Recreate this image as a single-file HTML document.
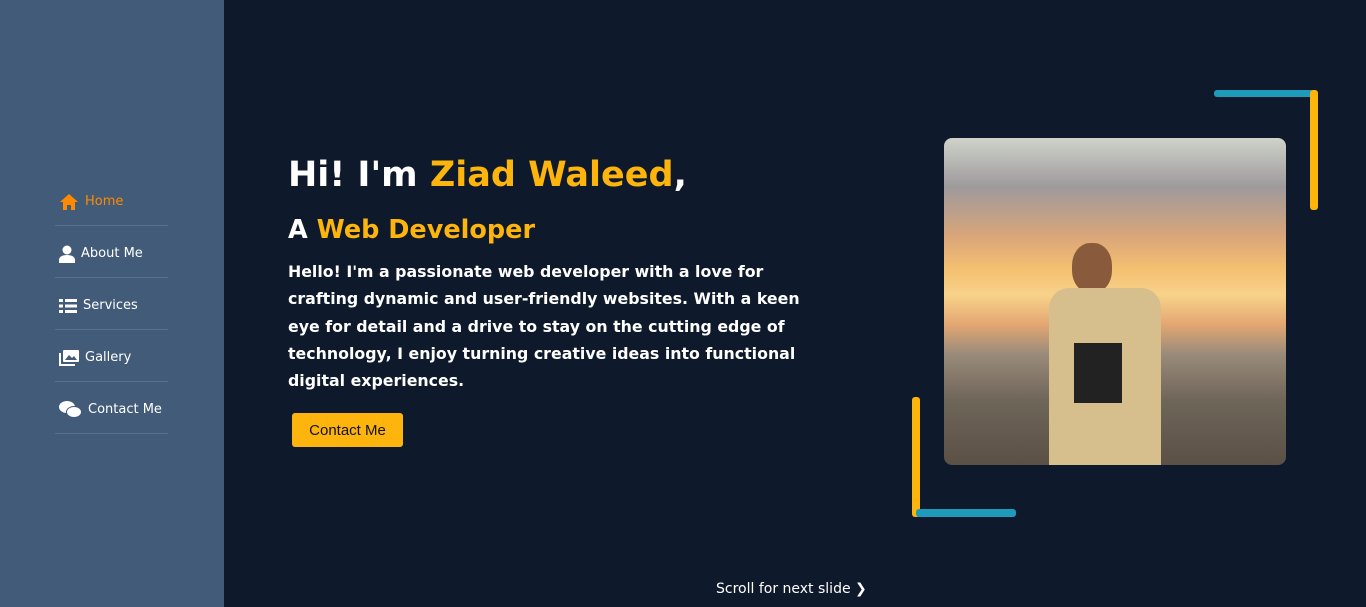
<!DOCTYPE html>
<html><head><style>
*{margin:0;padding:0;box-sizing:border-box}
body{width:1366px;height:607px;overflow:hidden;background:#0e1a2b;font-family:"Comic Sans MS","DejaVu Sans","Liberation Sans",sans-serif;position:relative}
.side{position:absolute;left:0;top:0;width:224px;height:607px;background:#425b78}
.nav{position:absolute;left:55px;top:174px;width:113px}
.nav div{height:52px;border-bottom:1px solid #5a7090;display:flex;align-items:center;padding-left:4px;padding-top:4px;color:#fff;font-size:13px;gap:6px;white-space:nowrap}
.nav div.a{color:#ff8a00}
svg{display:block;flex:none}
h1{position:absolute;left:288px;top:155px;color:#fff;font-size:35px;font-weight:bold;white-space:nowrap}
h2{position:absolute;left:288px;top:215px;color:#fff;font-size:25.5px;font-weight:bold;white-space:nowrap}
.y{color:#fdb50d}
p{position:absolute;left:288px;top:258px;color:#fff;font-size:15.8px;font-weight:bold;line-height:27.3px;white-space:nowrap}
.btn{position:absolute;left:292px;top:413px;width:111px;height:34px;background:#fdb50d;border-radius:3px;color:#111;font-family:"Liberation Sans",sans-serif;font-size:15px;display:flex;align-items:center;justify-content:center}
.bar{position:absolute;border-radius:3px}
.photo{position:absolute;left:944px;top:138px;width:342px;height:327px;border-radius:8px;overflow:hidden;
background:linear-gradient(180deg,#cfd3c9 0%,#9e9a9c 15%,#d9a57a 30%,#f4c070 40%,#f8d28a 48%,#e3a772 57%,#9a8b7a 66%,#6f665a 80%,#5a5045 100%)}
.scroll{position:absolute;left:716px;top:581px;color:#fff;font-size:14px;white-space:nowrap}
</style></head><body>
<div class="side"><div class="nav">
<div class="a"><svg width="20" height="18" viewBox="0 0 20 18"><path d="M10 1L1 9h3v8h4v-5h4v5h4V9h3z" fill="#ff8a00"/></svg>Home</div>
<div><svg width="16" height="18" viewBox="0 0 16 18"><circle cx="8" cy="5" r="4.5" fill="#fff"/><path d="M0 18v-3c0-3 3-5 8-5s8 2 8 5v3z" fill="#fff"/></svg>About Me</div>
<div><svg width="18" height="14" viewBox="0 0 18 14"><g fill="#fff"><rect x="0" y="0" width="4" height="3"/><rect x="6" y="0" width="12" height="3"/><rect x="0" y="5.5" width="4" height="3"/><rect x="6" y="5.5" width="12" height="3"/><rect x="0" y="11" width="4" height="3"/><rect x="6" y="11" width="12" height="3"/></g></svg>Services</div>
<div><svg width="20" height="16" viewBox="0 0 20 16"><rect x="4" y="0" width="16" height="12" rx="1" fill="#fff"/><path d="M6 10l4-5 3 3 2-2 3 4z" fill="#425b78"/><path d="M0 3v13h16v-2H2V3z" fill="#fff"/></svg>Gallery</div>
<div><svg width="23" height="18" viewBox="0 0 23 18"><ellipse cx="8" cy="6" rx="8" ry="6" fill="#fff"/><ellipse cx="15" cy="11" rx="7.5" ry="5.5" fill="#fff" stroke="#425b78" stroke-width="1"/></svg>Contact Me</div>
</div></div>
<h1>Hi! I'm <span class="y">Ziad Waleed</span>,</h1>
<h2>A <span class="y">Web Developer</span></h2>
<p>Hello! I'm a passionate web developer with a love for<br>crafting dynamic and user-friendly websites. With a keen<br>eye for detail and a drive to stay on the cutting edge of<br>technology, I enjoy turning creative ideas into functional<br>digital experiences.</p>
<div class="btn">Contact Me</div>
<div class="bar" style="left:1214px;top:90px;width:100px;height:7px;background:#1e9bbb"></div>
<div class="bar" style="left:1310px;top:90px;width:8px;height:120px;background:#fdb50d"></div>
<div class="bar" style="left:912px;top:397px;width:8px;height:120px;background:#fdb50d"></div>
<div class="bar" style="left:916px;top:509px;width:100px;height:8px;background:#1e9bbb"></div>
<div class="photo">
<div style="position:absolute;left:128px;top:105px;width:40px;height:50px;border-radius:45%;background:#8a5a3c"></div>
<div style="position:absolute;left:105px;top:150px;width:112px;height:180px;border-radius:20px 20px 0 0;background:#d6bf8c"></div>
<div style="position:absolute;left:130px;top:205px;width:48px;height:60px;background:#222"></div>
</div>
<div class="scroll">Scroll for next slide ❯</div>
</body></html>
